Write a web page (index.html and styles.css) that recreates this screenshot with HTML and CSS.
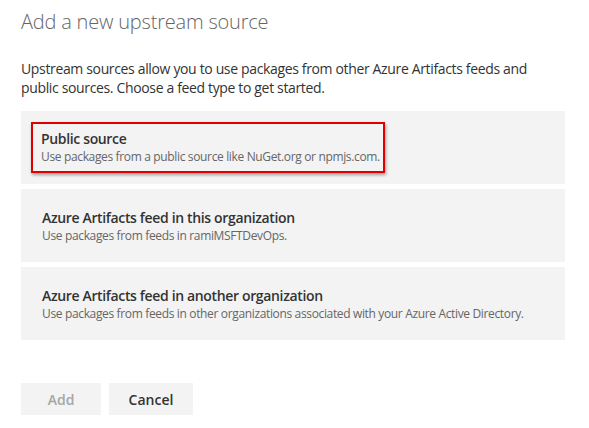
FILE: index.html
```html
<!DOCTYPE html>
<html>
<head>
<meta charset="utf-8">
<link rel="stylesheet" href="styles.css">
</head>
<body>
<div class="panel">
  <h1 class="title">Add a new upstream source</h1>
  <p class="intro">Upstream sources allow you to use packages from other Azure Artifacts feeds and public sources. Choose a feed type to get started.</p>
  <div class="options">
    <div class="option">
      <div class="highlight">
        <div class="option-title">Public source</div>
        <div class="option-desc">Use packages from a public source like NuGet.org or npmjs.com.</div>
      </div>
    </div>
    <div class="option">
      <div class="option-title">Azure Artifacts feed in this organization</div>
      <div class="option-desc">Use packages from feeds in ramiMSFTDevOps.</div>
    </div>
    <div class="option">
      <div class="option-title">Azure Artifacts feed in another organization</div>
      <div class="option-desc">Use packages from feeds in other organizations associated with your Azure Active Directory.</div>
    </div>
  </div>
  <div class="actions">
    <button class="btn btn-disabled">Add</button>
    <button class="btn">Cancel</button>
  </div>
</div>
</body>
</html>
```

FILE: styles.css
```css
html, body {
  margin: 0;
  padding: 0;
  background: #fff;
}
body {
  font-family: "Open Sans", "Noto Sans", sans-serif;
  color: #333;
}
.panel {
  padding: 8px 24px 0 21px;
  width: 544px;
}
.title {
  margin: 0;
  font-size: 20px;
  font-weight: 300;
  color: #666;
  line-height: 28px;
  letter-spacing: -0.2px;
}
.intro {
  margin: 23px 0 14px;
  font-size: 14px;
  line-height: 19px;
  color: #333;
  letter-spacing: -0.35px;
}
.options {
  display: flex;
  flex-direction: column;
  gap: 5px;
}
.option {
  background: #f3f3f3;
  height: 73px;
  box-sizing: border-box;
  padding: 0 21px;
  display: flex;
  flex-direction: column;
  justify-content: center;
  align-items: flex-start;
}
.highlight {
  border: 2px solid #e00000;
  box-shadow: 1px 2px 3px rgba(0,0,0,0.35);
  margin-left: -11px;
  padding: 5px 3px 6px 8px;
}
.option-title {
  font-size: 14px;
  font-weight: 600;
  line-height: 20px;
  color: #333;
  letter-spacing: -0.35px;
}
.option-desc {
  font-size: 12px;
  line-height: 16px;
  color: #666;
  letter-spacing: -0.35px;
}
.actions {
  display: flex;
  gap: 8px;
  margin-top: 43px;
}
.btn {
  font-family: inherit;
  font-size: 14px;
  font-weight: 600;
  height: 32px;
  border: none;
  background: #f3f3f3;
  color: #333;
  padding: 0;
  width: 84px;
}
.btn-disabled {
  width: 80px;
  color: #a6a6a6;
}
```
